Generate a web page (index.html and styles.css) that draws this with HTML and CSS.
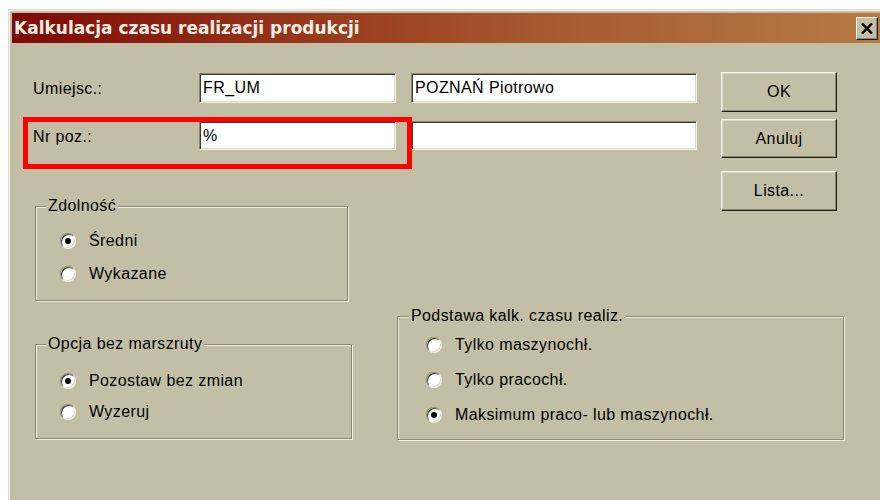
FILE: index.html
```html
<!DOCTYPE html>
<html lang="pl">
<head>
<meta charset="utf-8">
<title>Kalkulacja czasu realizacji produkcji</title>
<link rel="stylesheet" href="styles.css">
</head>
<body>
<div class="window">
  <div class="titlebar">
    <span class="title">Kalkulacja czasu realizacji produkcji</span>
    <button class="close" type="button" aria-label="Zamknij">
      <svg width="12" height="11" viewBox="0 0 12 11">
        <path d="M1 0.5 L11 10.5 M11 0.5 L1 10.5" stroke="#000" stroke-width="2.4" fill="none"/>
      </svg>
    </button>
  </div>

  <div class="content">
    <div class="upper">
      <div class="main-col">
        <div class="fields">
          <span class="field-label">Umiejsc.:</span>
          <div class="textbox">FR_UM</div>
          <div class="textbox">POZNAŃ Piotrowo</div>
          <span class="field-label">Nr poz.:</span>
          <div class="textbox">%</div>
          <div class="textbox"></div>
        </div>

        <fieldset class="group group--capacity">
          <legend>Zdolność</legend>
          <div class="options">
            <div class="option"><span class="radio radio--on"></span><span>Średni</span></div>
            <div class="option"><span class="radio"></span><span>Wykazane</span></div>
          </div>
        </fieldset>
      </div>

      <div class="buttons">
        <button class="btn" type="button">OK</button>
        <button class="btn btn--short" type="button">Anuluj</button>
        <button class="btn btn--list" type="button">Lista...</button>
      </div>
    </div>

    <div class="lower">
      <fieldset class="group group--routing">
        <legend>Opcja bez marszruty</legend>
        <div class="options">
          <div class="option"><span class="radio radio--on"></span><span>Pozostaw bez zmian</span></div>
          <div class="option"><span class="radio"></span><span>Wyzeruj</span></div>
        </div>
      </fieldset>

      <fieldset class="group group--basis">
        <legend>Podstawa kalk. czasu realiz.</legend>
        <div class="options">
          <div class="option"><span class="radio"></span><span>Tylko maszynochł.</span></div>
          <div class="option"><span class="radio"></span><span>Tylko pracochł.</span></div>
          <div class="option"><span class="radio radio--on"></span><span>Maksimum praco- lub maszynochł.</span></div>
        </div>
      </fieldset>
    </div>

    <div class="highlight"></div>
  </div>
</div>
</body>
</html>
```

FILE: styles.css
```css
html, body {
  margin: 0;
  padding: 0;
  background: #ffffff;
  overflow: hidden;
  width: 880px;
  height: 500px;
}

.window {
  margin: 9px 0 0 8px;
  width: 880px;
  height: 491px;
  box-sizing: border-box;
  padding: 3px 0 0 3px;
  background: #c3bfa6;
  border-top: 1px solid #dedbc9;
  border-left: 1px solid #dedbc9;
  box-shadow: inset 1px 1px 0 #f4f2ea;
  font-family: "Liberation Sans", Arial, sans-serif;
  font-size: 16px;
  letter-spacing: 0.4px;
  color: #000;
  overflow: hidden;
}

/* caption bar */
.titlebar {
  width: 870px;
  height: 30px;
  display: flex;
  align-items: center;
  justify-content: space-between;
  background: linear-gradient(to right, #7d0904 0%, #95321a 30%, #a6582f 60%, #b77b45 100%);
}

.title {
  padding-left: 2px;
  font-family: "DejaVu Sans", Verdana, sans-serif;
  font-weight: bold;
  font-size: 17px;
  letter-spacing: 0;
  color: #f6f1e4;
}

.close {
  width: 22px;
  height: 23px;
  margin-right: 4px;
  padding: 0;
  display: flex;
  align-items: center;
  justify-content: center;
  background: #c3bfa6;
  border: 1px solid;
  border-color: #f4f2ea #1e1d18 #1e1d18 #f4f2ea;
  box-shadow: inset -1px -1px 0 #8c8870;
}

/* client area */
.content {
  position: relative;
}

.upper {
  display: flex;
  align-items: flex-start;
  padding: 29px 0 0 21px;
}

.main-col {
  width: 664px;
}

.fields {
  margin-top: 1px;
  display: grid;
  grid-template-columns: 151px 197px 286px;
  grid-template-rows: 30px 29px;
  column-gap: 15px;
  row-gap: 18px;
  align-items: center;
}

.field-label {
  padding-top: 2px;
}

.textbox {
  height: 100%;
  box-sizing: border-box;
  display: flex;
  align-items: center;
  padding: 0 3px;
  background: #ffffff;
  border: 1px solid;
  border-color: #8c8870 #f4f2ea #f4f2ea #8c8870;
  box-shadow: inset 1px 1px 0 #3c3a32, inset -1px -1px 0 #dcd8c6;
  white-space: nowrap;
}

/* command buttons */
.buttons {
  margin-left: 24px;
  display: flex;
  flex-direction: column;
  gap: 7px;
}

.btn {
  width: 116px;
  height: 40px;
  padding: 0;
  font: inherit;
  letter-spacing: inherit;
  color: #000;
  background: #c3bfa6;
  border: 1px solid;
  border-color: #f4f2ea #1e1d18 #1e1d18 #f4f2ea;
  box-shadow: inset -1px -1px 0 #8c8870, inset 1px 1px 0 #dcd8c6;
}

.btn--short {
  height: 39px;
}

.btn--list {
  margin-top: 6px;
}

/* group boxes */
.group {
  margin: 0;
  min-width: 0;
  box-sizing: border-box;
  padding: 0 0 0 10px;
  border: 1px solid #8c8870;
  box-shadow: inset 1px 1px 0 #f1eee2, 1px 1px 0 #f1eee2;
}

.group legend {
  padding: 0 2px;
  line-height: 18px;
  background: #c3bfa6;
}

.options {
  margin-left: 14px;
}

.option {
  display: flex;
  align-items: center;
  gap: 13px;
}

.group--capacity {
  width: 313px;
  margin: 47px 0 0 2px;
  padding-top: 9px;
  padding-bottom: 10px;
}

.group--capacity .option {
  height: 33px;
}

.lower {
  display: flex;
  align-items: flex-end;
  gap: 45px;
  padding: 6px 0 0 23px;
}

.group--routing {
  width: 317px;
  padding-top: 12px;
  padding-bottom: 11px;
  margin-bottom: 1px;
}

.group--routing .option {
  height: 31px;
}

.group--basis {
  width: 447px;
  padding-left: 11px;
  padding-top: 2px;
  padding-bottom: 7px;
}

.group--basis .options {
  margin-left: 17px;
}

.group--basis .option {
  height: 35px;
}

/* option buttons */
.radio {
  position: relative;
  flex: none;
  width: 16px;
  height: 16px;
  box-sizing: border-box;
  border-radius: 50%;
  border: 1px solid;
  border-color: #8c8870 #f4f2ea #f4f2ea #8c8870;
  background: #ffffff;
  box-shadow: inset 1px 1px 0 #3c3a32, inset -1px -1px 0 #dcd8c6;
}

.radio--on::after {
  content: "";
  position: absolute;
  left: 4px;
  top: 4px;
  width: 6px;
  height: 6px;
  border-radius: 50%;
  background: #000;
}

/* red annotation frame around the item-number row */
.highlight {
  position: absolute;
  left: 11px;
  top: 74px;
  width: 389px;
  height: 52px;
  box-sizing: border-box;
  border: 5px solid #ff0000;
  pointer-events: none;
}
```
